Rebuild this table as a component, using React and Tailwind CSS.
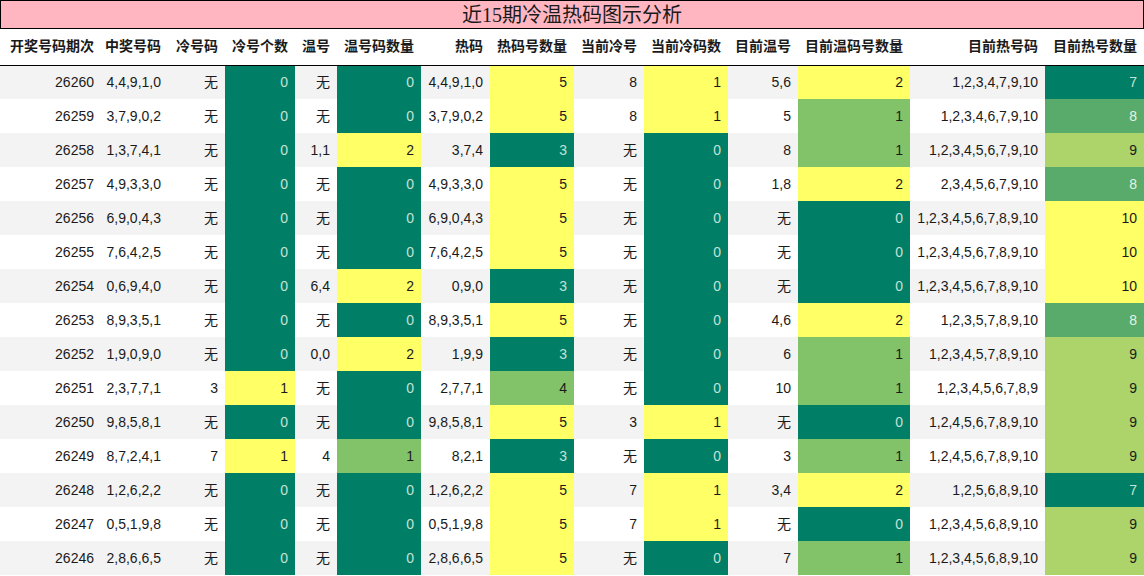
import React from 'react'

const widths = [101, 67, 57, 70, 42, 84, 69, 84, 70, 84, 70, 112, 135, 99]

const headers = [
  '开奖号码期次', '中奖号码', '冷号码', '冷号个数', '温号', '温号码数量', '热码',
  '热码号数量', '当前冷号', '当前冷码数', '目前温号', '目前温码号数量', '目前热号码', '目前热号数量',
]

// period, win, cold, coldN, warm, warmN, hot, hotN, curCold, curColdN, curWarm, curWarmN, curHot, curHotN
const rows = [
  ['26260', '4,4,9,1,0', '无', 0, '无', 0, '4,4,9,1,0', 5, '8', 1, '5,6', 2, '1,2,3,4,7,9,10', 7],
  ['26259', '3,7,9,0,2', '无', 0, '无', 0, '3,7,9,0,2', 5, '8', 1, '5', 1, '1,2,3,4,6,7,9,10', 8],
  ['26258', '1,3,7,4,1', '无', 0, '1,1', 2, '3,7,4', 3, '无', 0, '8', 1, '1,2,3,4,5,6,7,9,10', 9],
  ['26257', '4,9,3,3,0', '无', 0, '无', 0, '4,9,3,3,0', 5, '无', 0, '1,8', 2, '2,3,4,5,6,7,9,10', 8],
  ['26256', '6,9,0,4,3', '无', 0, '无', 0, '6,9,0,4,3', 5, '无', 0, '无', 0, '1,2,3,4,5,6,7,8,9,10', 10],
  ['26255', '7,6,4,2,5', '无', 0, '无', 0, '7,6,4,2,5', 5, '无', 0, '无', 0, '1,2,3,4,5,6,7,8,9,10', 10],
  ['26254', '0,6,9,4,0', '无', 0, '6,4', 2, '0,9,0', 3, '无', 0, '无', 0, '1,2,3,4,5,6,7,8,9,10', 10],
  ['26253', '8,9,3,5,1', '无', 0, '无', 0, '8,9,3,5,1', 5, '无', 0, '4,6', 2, '1,2,3,5,7,8,9,10', 8],
  ['26252', '1,9,0,9,0', '无', 0, '0,0', 2, '1,9,9', 3, '无', 0, '6', 1, '1,2,3,4,5,7,8,9,10', 9],
  ['26251', '2,3,7,7,1', '3', 1, '无', 0, '2,7,7,1', 4, '无', 0, '10', 1, '1,2,3,4,5,6,7,8,9', 9],
  ['26250', '9,8,5,8,1', '无', 0, '无', 0, '9,8,5,8,1', 5, '3', 1, '无', 0, '1,2,4,5,6,7,8,9,10', 9],
  ['26249', '8,7,2,4,1', '7', 1, '4', 1, '8,2,1', 3, '无', 0, '3', 1, '1,2,4,5,6,7,8,9,10', 9],
  ['26248', '1,2,6,2,2', '无', 0, '无', 0, '1,2,6,2,2', 5, '7', 1, '3,4', 2, '1,2,5,6,8,9,10', 7],
  ['26247', '0,5,1,9,8', '无', 0, '无', 0, '0,5,1,9,8', 5, '7', 1, '无', 0, '1,2,3,4,5,6,8,9,10', 9],
  ['26246', '2,8,6,6,5', '无', 0, '无', 0, '2,8,6,6,5', 5, '无', 0, '7', 1, '1,2,3,4,5,6,8,9,10', 9],
]

const DARK = 'bg-[#017f66] text-[#c4e2d8]'
const MID = 'bg-[#82c36a]'
const YEL = 'bg-[#ffff66]'
const G8 = 'bg-[#58ab6a] text-[#e4f2e6]'
const G9 = 'bg-[#acd46a]'

// colour scale per column: [min .. max]
const scales = {
  3: [DARK, YEL],
  5: [DARK, MID, YEL],
  7: [DARK, MID, YEL],
  9: [DARK, YEL],
  11: [DARK, MID, YEL],
  13: [DARK, G8, G9, YEL],
}
const mins = { 3: 0, 5: 0, 7: 3, 9: 0, 11: 0, 13: 7 }

const cellColor = (col, v) => {
  const s = scales[col]
  if (!s) return ''
  return s[v - mins[col]] || ''
}

const App = () => {
  return (
    <div className="w-[1144px] h-[576px] overflow-hidden bg-white text-[14px] text-[#1a1a1a] font-['Liberation_Sans','Noto_Sans_CJK_SC',sans-serif]">
      <div className="h-[29px] border border-black bg-[#ffb6c1] flex items-center justify-center text-[20px] leading-none font-['Liberation_Serif','Noto_Sans_CJK_SC',serif]">
        近15期冷温热码图示分析
      </div>
      <table className="table-fixed border-collapse w-[1144px]">
        <colgroup>
          {widths.map((w, i) => (
            <col key={i} style={{ width: w }} />
          ))}
        </colgroup>
        <thead>
          <tr className="h-[36px] border-b border-black">
            {headers.map((h, i) => (
              <th key={i} className="p-0 pr-[7px] text-right font-bold whitespace-nowrap">
                {h}
              </th>
            ))}
          </tr>
        </thead>
        <tbody>
          {rows.map((r, ri) => (
            <tr key={ri} className={ri % 2 === 0 ? 'h-[34px] bg-[#f3f3f3]' : 'h-[34px] bg-white'}>
              {r.map((v, ci) => (
                <td key={ci} className={`p-0 pr-[7px] text-right whitespace-nowrap ${cellColor(ci, v)}`}>
                  {v}
                </td>
              ))}
            </tr>
          ))}
        </tbody>
      </table>
    </div>
  )
}

export default App
